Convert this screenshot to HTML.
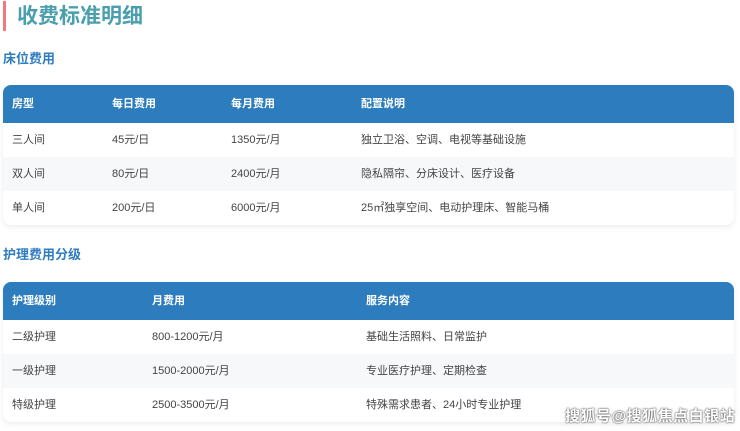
<!DOCTYPE html>
<html><head><meta charset="utf-8"><style>
body{margin:0;width:740px;height:431px;background:#fff;font-family:"Liberation Sans","Noto Sans CJK SC",sans-serif;position:relative;overflow:hidden}
.bar{position:absolute;left:3px;top:1px;width:3px;height:30px;background:#f07a7a}
.title{position:absolute;left:17px;top:2px;font-size:21px;font-weight:bold;color:#4a9fae;line-height:30px}
.h2{position:absolute;left:3px;font-size:13px;font-weight:bold;color:#2f7dc0;line-height:18px}
.tbl{position:absolute;left:3px;width:731px;border-radius:8px;overflow:hidden;box-shadow:0 2px 6px rgba(0,0,0,0.08);background:#fff}
.row{position:relative;height:34px;font-size:11px;color:#444;line-height:34px}
.row span{position:absolute;top:0}
.hd{height:38px;line-height:38px;background:#2c7cbe;color:#fff;font-weight:bold}
.alt{background:#f6f8fa}
.wm{position:absolute;left:565px;top:405px;font-size:15px;color:#fff;font-weight:bold;text-shadow:0 0 2px #555,0 0 1px #333;letter-spacing:0.5px}
</style></head><body>
<div class="bar"></div><div class="title">收费标准明细</div>
<div class="h2" style="top:50px">床位费用</div>
<div class="tbl" style="top:85px">
<div class="row hd"><span style="left:9px">房型</span><span style="left:109px">每日费用</span><span style="left:228px">每月费用</span><span style="left:358px">配置说明</span></div>
<div class="row"><span style="left:9px">三人间</span><span style="left:109px">45元/日</span><span style="left:228px">1350元/月</span><span style="left:358px">独立卫浴、空调、电视等基础设施</span></div>
<div class="row alt"><span style="left:9px">双人间</span><span style="left:109px">80元/日</span><span style="left:228px">2400元/月</span><span style="left:358px">隐私隔帘、分床设计、医疗设备</span></div>
<div class="row"><span style="left:9px">单人间</span><span style="left:109px">200元/日</span><span style="left:228px">6000元/月</span><span style="left:358px">25㎡独享空间、电动护理床、智能马桶</span></div>
</div>
<div class="h2" style="top:246px">护理费用分级</div>
<div class="tbl" style="top:282px">
<div class="row hd"><span style="left:9px">护理级别</span><span style="left:149px">月费用</span><span style="left:363px">服务内容</span></div>
<div class="row"><span style="left:9px">二级护理</span><span style="left:149px">800-1200元/月</span><span style="left:363px">基础生活照料、日常监护</span></div>
<div class="row alt"><span style="left:9px">一级护理</span><span style="left:149px">1500-2000元/月</span><span style="left:363px">专业医疗护理、定期检查</span></div>
<div class="row"><span style="left:9px">特级护理</span><span style="left:149px">2500-3500元/月</span><span style="left:363px">特殊需求患者、24小时专业护理</span></div>
</div>
<div class="wm">搜狐号@搜狐焦点白银站</div>
</body></html>
